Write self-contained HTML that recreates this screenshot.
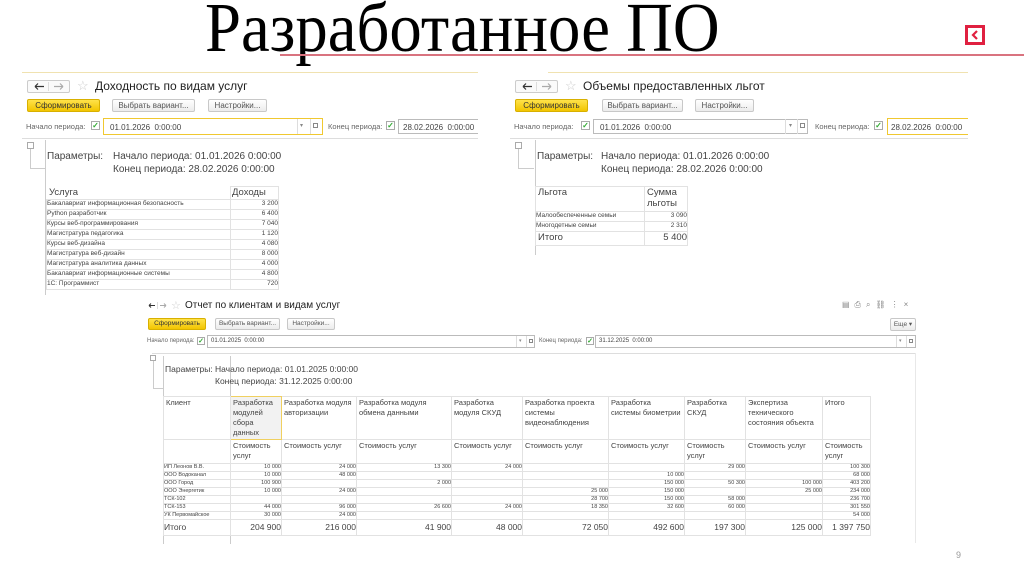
<!DOCTYPE html>
<html><head><meta charset="utf-8"><style>
*{margin:0;padding:0;box-sizing:border-box}
body{width:1024px;height:574px;background:#fff;position:relative;overflow:hidden;font-family:"Liberation Sans",sans-serif;color:#333}
.a{position:absolute;white-space:nowrap}
.btn{position:absolute;border:1px solid #c8c8c8;border-radius:2px;background:linear-gradient(#fff,#ececec);color:#555;text-align:center;white-space:nowrap}
.y{background:linear-gradient(#ffe24a,#f2c500);border-color:#d8b000;color:#333}
.inp{position:absolute;border:1px solid #bbb;background:#fff;color:#444;white-space:nowrap;overflow:hidden}
.chk{position:absolute;border:1px solid #aaa;background:#fff;color:#3a3;text-align:center;font-weight:bold}
.nav{position:absolute;border:1px solid #ccc;border-radius:2px;background:#fafafa;color:#555}
table{border-collapse:collapse;position:absolute;table-layout:fixed}
td{border:1px solid #e2e2e2;vertical-align:top;overflow:hidden;white-space:nowrap;color:#444}
.r{text-align:right}
</style></head><body>

<div class="a" style="left:205px;top:-11px;font-family:'Liberation Serif',serif;font-size:70px;color:#000;transform:scaleX(0.925);transform-origin:left">Разработанное ПО</div>
<div class="a" style="left:280px;top:54px;width:744px;height:2px;background:#d9737f"></div>
<div class="a" style="left:965px;top:25px;width:20px;height:20px;background:#e02040"></div>
<div class="a" style="left:968px;top:28px;width:14px;height:14px;background:#fff"></div>
<svg class="a" style="left:968px;top:28px" width="14" height="14"><path d="M9 3 L5 7 L9 11" stroke="#e02040" stroke-width="2.2" fill="none"/></svg>
<div class="a" style="left:22px;top:72px;width:456px;height:1px;background:#f0e2b0"></div>

<!-- Left panel -->
<div class="nav" style="left:27px;top:80px;width:43px;height:13px"></div>
<svg class="a" style="left:27px;top:80px" width="43" height="13"><path d="M8 6.5h9M8 6.5l3-3M8 6.5l3 3" stroke="#333" stroke-width="1.2" fill="none"/><path d="M21.5 2v9" stroke="#ddd"/><path d="M27 6.5h9M36 6.5l-3-3M36 6.5l-3 3" stroke="#aaa" stroke-width="1.2" fill="none"/></svg>
<div class="a" style="left:77px;top:78px;font-size:13px;color:#ccc">☆</div>
<div class="a" style="left:95px;top:79px;font-size:12px;color:#222">Доходность по видам услуг</div>
<div class="btn y" style="left:27px;top:99px;width:73px;height:13px;font-size:8px;line-height:11px">Сформировать</div>
<div class="btn" style="left:112px;top:99px;width:83px;height:13px;font-size:8px;line-height:11px">Выбрать вариант...</div>
<div class="btn" style="left:208px;top:99px;width:59px;height:13px;font-size:8px;line-height:11px">Настройки...</div>
<div class="a" style="left:26px;top:122px;font-size:7.5px;color:#666">Начало периода:</div>
<div class="chk" style="left:91px;top:121px;width:9px;height:9px;font-size:8px;line-height:8px">✓</div>
<div class="inp" style="left:103px;top:118px;width:220px;height:17px;border-color:#f0c830;font-size:8px;padding:4px 6px">01.01.2026&nbsp; 0:00:00</div>
<div class="a" style="left:297px;top:119px;width:1px;height:15px;background:#ddd"></div>
<div class="a" style="left:310px;top:119px;width:1px;height:15px;background:#ddd"></div>
<div class="a" style="left:300px;top:122px;font-size:6px;color:#888">▾</div><div class="a" style="left:313px;top:123px;width:5px;height:5px;border:1px solid #888"></div>
<div class="a" style="left:328px;top:122px;font-size:7.5px;color:#666">Конец периода:</div>
<div class="chk" style="left:386px;top:121px;width:9px;height:9px;font-size:8px;line-height:8px">✓</div>
<div class="inp" style="left:398px;top:119px;width:80px;height:15px;font-size:8px;padding:3px 4px;border-right:none">28.02.2026&nbsp; 0:00:00</div>
<div class="a" style="left:22px;top:138px;width:456px;height:1px;background:#ddd"></div>
<div class="a" style="left:27px;top:142px;width:7px;height:7px;border:1px solid #aaa"></div>
<div class="a" style="left:30px;top:149px;width:1px;height:20px;background:#ccc"></div>
<div class="a" style="left:30px;top:168px;width:15px;height:1px;background:#ccc"></div>
<div class="a" style="left:45px;top:140px;width:1px;height:155px;background:#ccc"></div>
<div class="a" style="left:47px;top:151px;font-size:10px;color:#444">Параметры:</div>
<div class="a" style="left:113px;top:151px;font-size:10px;color:#444">Начало периода: 01.01.2026 0:00:00</div>
<div class="a" style="left:113px;top:164px;font-size:10px;color:#444">Конец периода: 28.02.2026 0:00:00</div>
<table style="left:46px;top:186px;width:232px;font-size:6.5px">
<col style="width:184px"><col style="width:48px">
<tr style="height:13px"><td style="font-size:9.5px;padding-left:2px;border-top-color:#fff;border-left-color:#fff">Услуга</td><td style="font-size:9.5px;padding-left:1px">Доходы</td></tr>
<tr style="height:10px"><td>Бакалавриат информационная безопасность</td><td class="r">3 200</td></tr>
<tr style="height:10px"><td>Python разработчик</td><td class="r">6 400</td></tr>
<tr style="height:10px"><td>Курсы веб-программирования</td><td class="r">7 040</td></tr>
<tr style="height:10px"><td>Магистратура педагогика</td><td class="r">1 120</td></tr>
<tr style="height:10px"><td>Курсы веб-дизайна</td><td class="r">4 080</td></tr>
<tr style="height:10px"><td>Магистратура веб-дизайн</td><td class="r">8 000</td></tr>
<tr style="height:10px"><td>Магистратура аналитика данных</td><td class="r">4 000</td></tr>
<tr style="height:10px"><td>Бакалавриат информационные системы</td><td class="r">4 800</td></tr>
<tr style="height:10px"><td>1С: Программист</td><td class="r">720</td></tr>
</table>

<!-- Right panel -->
<div class="a" style="left:548px;top:72px;width:420px;height:1px;background:#f0e2b0"></div>
<div class="nav" style="left:515px;top:80px;width:43px;height:13px"></div>
<svg class="a" style="left:515px;top:80px" width="43" height="13"><path d="M8 6.5h9M8 6.5l3-3M8 6.5l3 3" stroke="#333" stroke-width="1.2" fill="none"/><path d="M21.5 2v9" stroke="#ddd"/><path d="M27 6.5h9M36 6.5l-3-3M36 6.5l-3 3" stroke="#aaa" stroke-width="1.2" fill="none"/></svg>
<div class="a" style="left:565px;top:78px;font-size:13px;color:#ccc">☆</div>
<div class="a" style="left:583px;top:79px;font-size:12px;color:#222">Объемы предоставленных льгот</div>
<div class="btn y" style="left:515px;top:99px;width:73px;height:13px;font-size:8px;line-height:11px">Сформировать</div>
<div class="btn" style="left:602px;top:99px;width:81px;height:13px;font-size:8px;line-height:11px">Выбрать вариант...</div>
<div class="btn" style="left:695px;top:99px;width:59px;height:13px;font-size:8px;line-height:11px">Настройки...</div>
<div class="a" style="left:514px;top:122px;font-size:7.5px;color:#666">Начало периода:</div>
<div class="chk" style="left:581px;top:121px;width:9px;height:9px;font-size:8px;line-height:8px">✓</div>
<div class="inp" style="left:593px;top:119px;width:215px;height:15px;font-size:8px;padding:3px 6px">01.01.2026&nbsp; 0:00:00</div>
<div class="a" style="left:785px;top:119px;width:1px;height:15px;background:#ddd"></div>
<div class="a" style="left:797px;top:119px;width:1px;height:15px;background:#ddd"></div>
<div class="a" style="left:789px;top:122px;font-size:6px;color:#888">▾</div><div class="a" style="left:800px;top:123px;width:5px;height:5px;border:1px solid #888"></div>
<div class="a" style="left:815px;top:122px;font-size:7.5px;color:#666">Конец периода:</div>
<div class="chk" style="left:874px;top:121px;width:9px;height:9px;font-size:8px;line-height:8px">✓</div>
<div class="inp" style="left:887px;top:118px;width:81px;height:17px;border-color:#f0c830;border-right:none;font-size:8px;padding:4px 3px">28.02.2026&nbsp; 0:00:00</div>
<div class="a" style="left:510px;top:138px;width:458px;height:1px;background:#ddd"></div>
<div class="a" style="left:515px;top:142px;width:7px;height:7px;border:1px solid #aaa"></div>
<div class="a" style="left:518px;top:149px;width:1px;height:20px;background:#ccc"></div>
<div class="a" style="left:518px;top:168px;width:16px;height:1px;background:#ccc"></div>
<div class="a" style="left:535px;top:140px;width:1px;height:115px;background:#ccc"></div>
<div class="a" style="left:537px;top:151px;font-size:10px;color:#444">Параметры:</div>
<div class="a" style="left:601px;top:151px;font-size:10px;color:#444">Начало периода: 01.01.2026 0:00:00</div>
<div class="a" style="left:601px;top:164px;font-size:10px;color:#444">Конец периода: 28.02.2026 0:00:00</div>
<table style="left:535px;top:186px;width:152px;font-size:6.5px">
<col style="width:109px"><col style="width:43px">
<tr style="height:25px"><td style="font-size:9.5px;padding-left:2px">Льгота</td><td style="font-size:9.5px;padding-left:2px;white-space:normal;line-height:11px">Сумма льготы</td></tr>
<tr style="height:10px"><td>Малообеспеченные семьи</td><td class="r">3 090</td></tr>
<tr style="height:10px"><td>Многодетные семьи</td><td class="r">2 310</td></tr>
<tr style="height:14px"><td style="font-size:9.5px;padding-left:2px">Итого</td><td class="r" style="font-size:9.5px">5 400</td></tr>
</table>

<!-- Bottom panel -->
<svg class="a" style="left:146px;top:300px" width="24" height="11"><path d="M3 5.5h6M3 5.5l2-2M3 5.5l2 2" stroke="#333" fill="none"/><path d="M11.5 2v7" stroke="#ddd"/><path d="M14 5.5h6M20 5.5l-2-2M20 5.5l-2 2" stroke="#aaa" fill="none"/></svg>
<div class="a" style="left:171px;top:299px;font-size:11px;color:#ccc">☆</div>
<div class="a" style="left:185px;top:300px;font-size:10px;color:#222">Отчет по клиентам и видам услуг</div>
<div class="a" style="left:842px;top:300px;font-size:8px;color:#888;letter-spacing:5px">▤⎙⌕⛓⋮×</div>
<div class="btn y" style="left:148px;top:318px;width:58px;height:12px;font-size:6.5px;line-height:10px">Сформировать</div>
<div class="btn" style="left:215px;top:318px;width:65px;height:12px;font-size:6.5px;line-height:10px">Выбрать вариант...</div>
<div class="btn" style="left:287px;top:318px;width:48px;height:12px;font-size:6.5px;line-height:10px">Настройки...</div>
<div class="btn" style="left:890px;top:318px;width:26px;height:13px;font-size:6.5px;line-height:11px">Еще ▾</div>
<div class="a" style="left:147px;top:338px;font-size:6px;color:#666">Начало периода:</div>
<div class="chk" style="left:197px;top:337px;width:8px;height:8px;font-size:7px;line-height:7px">✓</div>
<div class="inp" style="left:207px;top:335px;width:328px;height:13px;font-size:6px;padding:2px 3px">01.01.2025&nbsp; 0:00:00</div>
<div class="a" style="left:516px;top:336px;width:1px;height:11px;background:#ddd"></div>
<div class="a" style="left:526px;top:336px;width:1px;height:11px;background:#ddd"></div>
<div class="a" style="left:519px;top:338px;font-size:5px;color:#888">▾</div><div class="a" style="left:529px;top:339px;width:4px;height:4px;border:1px solid #888"></div>
<div class="a" style="left:539px;top:338px;font-size:6px;color:#666">Конец периода:</div>
<div class="chk" style="left:586px;top:337px;width:8px;height:8px;font-size:7px;line-height:7px">✓</div>
<div class="inp" style="left:595px;top:335px;width:321px;height:13px;font-size:6px;padding:2px 3px">31.12.2025&nbsp; 0:00:00</div>
<div class="a" style="left:896px;top:336px;width:1px;height:11px;background:#ddd"></div>
<div class="a" style="left:906px;top:336px;width:1px;height:11px;background:#ddd"></div>
<div class="a" style="left:899px;top:338px;font-size:5px;color:#888">▾</div><div class="a" style="left:909px;top:339px;width:4px;height:4px;border:1px solid #888"></div>
<div class="a" style="left:152px;top:353px;width:764px;height:1px;background:#ddd"></div>
<div class="a" style="left:915px;top:353px;width:1px;height:190px;background:#e8e8e8"></div>
<div class="a" style="left:150px;top:355px;width:6px;height:6px;border:1px solid #aaa"></div>
<div class="a" style="left:153px;top:361px;width:1px;height:27px;background:#ccc"></div>
<div class="a" style="left:153px;top:388px;width:10px;height:1px;background:#ccc"></div>
<div class="a" style="left:163px;top:356px;width:1px;height:188px;background:#ccc"></div>
<div class="a" style="left:230px;top:356px;width:1px;height:188px;background:#ccc"></div>
<div class="a" style="left:165px;top:364px;font-size:8.5px;color:#444">Параметры:</div>
<div class="a" style="left:215px;top:364px;font-size:8.5px;color:#444">Начало периода: 01.01.2025 0:00:00</div>
<div class="a" style="left:215px;top:376px;font-size:8.5px;color:#444">Конец периода: 31.12.2025 0:00:00</div>
<table style="left:163px;top:396px;width:707px;font-size:5.5px">
<col style="width:67px"><col style="width:51px"><col style="width:75px"><col style="width:95px"><col style="width:71px"><col style="width:86px"><col style="width:76px"><col style="width:61px"><col style="width:77px"><col style="width:48px">
<tr style="height:40px;font-size:7.5px;line-height:10px"><td style="padding:1px 2px">Клиент</td><td style="padding:1px 2px;background:#f2f2f2;border:1px solid #f0d060">Разработка<br>модулей<br>сбора<br>данных</td><td style="padding:1px 2px">Разработка модуля<br>авторизации</td><td style="padding:1px 2px">Разработка модуля<br>обмена данными</td><td style="padding:1px 2px">Разработка<br>модуля СКУД</td><td style="padding:1px 2px">Разработка проекта<br>системы<br>видеонаблюдения</td><td style="padding:1px 2px">Разработка<br>системы биометрии</td><td style="padding:1px 2px">Разработка<br>СКУД</td><td style="padding:1px 2px">Экспертиза<br>технического<br>состояния объекта</td><td style="padding:1px 2px">Итого</td></tr>
<tr style="height:24px;font-size:7.5px;line-height:10px"><td></td><td style="padding:1px 2px">Стоимость<br>услуг</td><td style="padding:1px 2px">Стоимость услуг</td><td style="padding:1px 2px">Стоимость услуг</td><td style="padding:1px 2px">Стоимость услуг</td><td style="padding:1px 2px">Стоимость услуг</td><td style="padding:1px 2px">Стоимость услуг</td><td style="padding:1px 2px">Стоимость<br>услуг</td><td style="padding:1px 2px">Стоимость услуг</td><td style="padding:1px 2px">Стоимость<br>услуг</td></tr>
<tr style="height:8px;line-height:7px"><td>ИП Леонов В.В.</td><td class="r">10 000</td><td class="r">24 000</td><td class="r">13 300</td><td class="r">24 000</td><td></td><td></td><td class="r">29 000</td><td></td><td class="r">100 300</td></tr>
<tr style="height:8px;line-height:7px"><td>ООО Водоканал</td><td class="r">10 000</td><td class="r">48 000</td><td></td><td></td><td></td><td class="r">10 000</td><td></td><td></td><td class="r">68 000</td></tr>
<tr style="height:8px;line-height:7px"><td>ООО Город</td><td class="r">100 900</td><td></td><td class="r">2 000</td><td></td><td></td><td class="r">150 000</td><td class="r">50 300</td><td class="r">100 000</td><td class="r">403 200</td></tr>
<tr style="height:8px;line-height:7px"><td>ООО Энергетик</td><td class="r">10 000</td><td class="r">24 000</td><td></td><td></td><td class="r">25 000</td><td class="r">150 000</td><td></td><td class="r">25 000</td><td class="r">234 000</td></tr>
<tr style="height:8px;line-height:7px"><td>ТСК-102</td><td></td><td></td><td></td><td></td><td class="r">28 700</td><td class="r">150 000</td><td class="r">58 000</td><td></td><td class="r">236 700</td></tr>
<tr style="height:8px;line-height:7px"><td>ТСК-153</td><td class="r">44 000</td><td class="r">96 000</td><td class="r">26 600</td><td class="r">24 000</td><td class="r">18 350</td><td class="r">32 600</td><td class="r">60 000</td><td></td><td class="r">301 550</td></tr>
<tr style="height:8px;line-height:7px"><td>УК Первомайское</td><td class="r">30 000</td><td class="r">24 000</td><td></td><td></td><td></td><td></td><td></td><td></td><td class="r">54 000</td></tr>
<tr style="height:16px;font-size:8.5px;line-height:14px"><td>Итого</td><td class="r">204 900</td><td class="r">216 000</td><td class="r">41 900</td><td class="r">48 000</td><td class="r">72 050</td><td class="r">492 600</td><td class="r">197 300</td><td class="r">125 000</td><td class="r">1 397 750</td></tr>
</table>

<div class="a" style="left:956px;top:550px;font-size:9px;color:#999">9</div>
</body></html>
